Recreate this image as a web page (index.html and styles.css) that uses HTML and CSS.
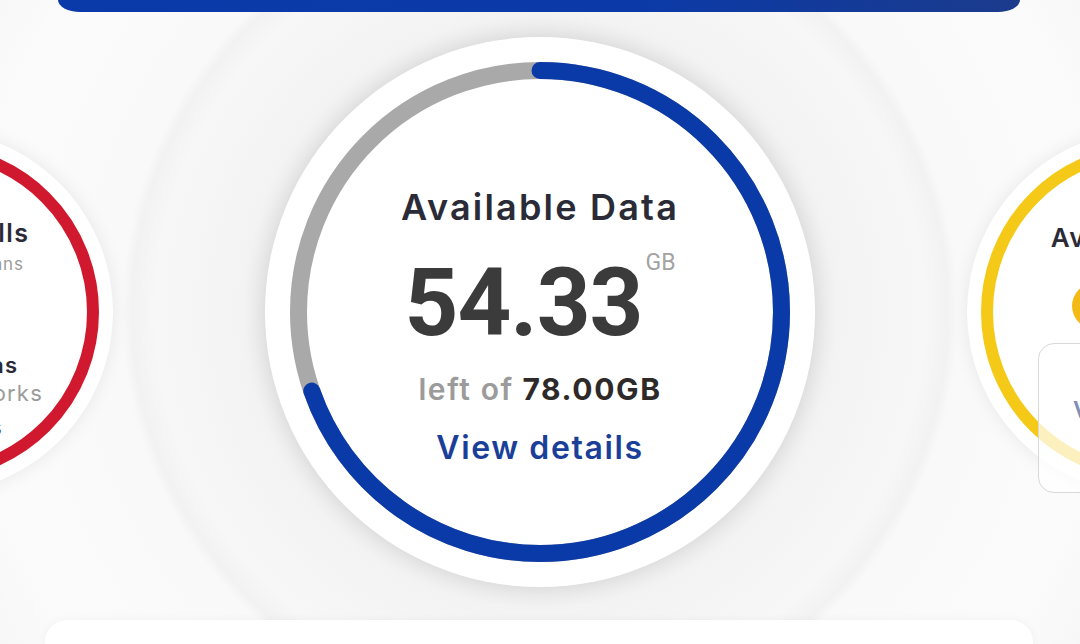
FILE: index.html
```html
<!DOCTYPE html>
<html lang="en">
<head>
  <meta charset="UTF-8">
  <meta name="viewport" content="width=device-width, initial-scale=1.0">
  <title>My Usage</title>
  <link rel="stylesheet" href="styles.css">
</head>
<body>
  <div class="topbar"></div>

  <div class="carousel">
    <!-- calls -->
    <div class="dial dial-side">
      <svg class="ring" width="336" height="336" viewBox="0 0 336 336">
        <circle cx="168" cy="168" r="162" fill="none" stroke="#d0192e" stroke-width="12"/>
      </svg>
      <div class="dial-body side-body">
        <div class="side-title">Available Calls</div>
        <div class="side-sub">Valid on all call plans</div>
        <div class="side-value">350</div>
        <div class="side-strong">Unlimited mins</div>
        <div class="side-muted">across all networks</div>
        <div class="side-link">View details</div>
      </div>
    </div>

    <!-- data -->
    <div class="dial dial-main">
      <svg class="ring" width="500" height="500" viewBox="0 0 500 500">
        <circle cx="250" cy="250" r="241.5" fill="none" stroke="#a9a9a9" stroke-width="17"/>
        <circle cx="250" cy="250" r="241.5" fill="none" stroke="#0a3aa8" stroke-width="17"
                stroke-linecap="round" stroke-dasharray="1057 2000" transform="rotate(-90 250 250)"/>
      </svg>
      <div class="dial-body main-body">
        <div class="main-title">Available Data</div>
        <div class="main-value">
          <span class="amount">54.33</span>
          <span class="unit">GB</span>
        </div>
        <div class="main-total"><span class="muted">left of</span> 78.00GB</div>
        <a class="main-link" href="#">View details</a>
      </div>
    </div>

    <!-- sms -->
    <div class="dial dial-side">
      <svg class="ring" width="336" height="336" viewBox="0 0 336 336">
        <circle cx="168" cy="168" r="162" fill="none" stroke="#f5c918" stroke-width="12"/>
      </svg>
      <div class="dial-body side-body sms-body">
        <div class="side-title sms-title">Available SMS</div>
        <div class="loader"></div>
      </div>
      <div class="overlay">
        <span class="overlay-link">View details</span>
      </div>
    </div>
  </div>

  <div class="summary"></div>
</body>
</html>
```

FILE: styles.css
```css
body {
  margin: 0;
  width: 1080px;
  height: 644px;
  overflow: hidden;
  font-family: Inter, "Open Sans", sans-serif;
  color: #2b2b38;
  background: radial-gradient(circle at 540px 312px,
    #ebebeb 0, #ebebeb 276px, #f3f3f3 298px, #f7f7f7 385px,
    #f2f2f2 408px, #f9f9f9 418px, #fbfbfb 560px, #f7f7f7 640px, #fbfbfb 700px);
}
.topbar {
  margin-left: 58px;
  width: 962px;
  height: 12px;
  border-radius: 0 0 22px 22px / 0 0 12px 12px;
  background: linear-gradient(90deg, #0a3aa9 0%, #0b3aa8 60%, #1b3b8c 100%);
}
.carousel {
  margin-top: 25px;
  height: 550px;
  display: flex;
  justify-content: center;
  align-items: center;
  gap: 152px;
}
.dial {
  flex-shrink: 0;
  display: grid;
  border-radius: 50%;
  background: #fff;
  position: relative;
}
.dial > .ring,
.dial > .dial-body {
  grid-area: 1 / 1;
}
.ring {
  align-self: center;
  justify-self: center;
}
.dial-body {
  display: flex;
  flex-direction: column;
  align-items: center;
  white-space: nowrap;
}
.dial-main {
  width: 550px;
  height: 550px;
  box-shadow: 0 0 22px rgba(0, 0, 0, 0.09);
}
.dial-side {
  width: 364px;
  height: 364px;
  box-shadow: 0 0 18px rgba(0, 0, 0, 0.08);
}

/* main dial */
.main-body {
  padding-top: 149px;
}
.main-title {
  font-size: 36px;
  line-height: 42px;
  font-weight: 600;
  letter-spacing: 2.2px;
  color: #2b2b38;
}
.main-value {
  display: flex;
  align-items: flex-start;
  margin-top: 35px;
  font-family: Roboto, sans-serif;
}
.amount {
  font-size: 94px;
  line-height: 80px;
  font-weight: 700;
  color: #3b3b3b;
  letter-spacing: -1px;
}
.unit {
  font-size: 23px;
  line-height: 21px;
  color: #a3a3a3;
  margin: -11px 0 0 3px;
}
.main-total {
  margin-top: 28px;
  font-size: 30px;
  line-height: 36px;
  font-weight: 700;
  letter-spacing: 1.6px;
  color: #2e2a2a;
}
.main-total .muted {
  font-weight: 600;
  color: #9b9b9b;
}
.main-link {
  margin-top: 22px;
  font-size: 32px;
  line-height: 38px;
  font-weight: 600;
  letter-spacing: 1.6px;
  color: #1b3f99;
  text-decoration: none;
}

/* side dials */
.side-body {
  padding-top: 88px;
}
.side-title {
  font-size: 25px;
  line-height: 30px;
  font-weight: 600;
  letter-spacing: 1.4px;
  color: #2b2b38;
}
.side-sub {
  margin-top: 4px;
  font-size: 17px;
  line-height: 24px;
  letter-spacing: 0.8px;
  color: #9b9b9b;
}
.side-value {
  font-family: Roboto, sans-serif;
  font-size: 56px;
  line-height: 60px;
  font-weight: 700;
  color: #3b3b3b;
}
.side-strong {
  margin-top: 15px;
  font-size: 22px;
  line-height: 28px;
  font-weight: 600;
  letter-spacing: 1.2px;
  color: #2b2b38;
}
.side-muted {
  font-size: 22px;
  line-height: 28px;
  letter-spacing: 1.2px;
  color: #9b9b9b;
}
.side-link {
  margin-top: 6px;
  font-size: 22px;
  line-height: 28px;
  font-weight: 600;
  letter-spacing: 1.2px;
  color: #1b3f99;
}
.sms-body {
  padding-top: 92px;
}
.sms-title {
  font-size: 26px;
  line-height: 32px;
}
.loader {
  margin-top: 29px;
  width: 154px;
  height: 46px;
  border-radius: 23px;
  background: linear-gradient(90deg, #f3b914, #f7cf2a);
}
.overlay {
  position: absolute;
  left: 71px;
  top: 213px;
  width: 222px;
  height: 150px;
  box-sizing: border-box;
  border: 1px solid #d9d9d9;
  border-radius: 16px;
  background: rgba(255, 255, 255, 0.72);
  display: flex;
  align-items: center;
  justify-content: center;
}
.overlay-link {
  font-size: 23px;
  font-weight: 600;
  letter-spacing: 1.4px;
  color: #7f8fb5;
  margin-top: -16px;
}

.summary {
  margin: 33px 0 0 45px;
  width: 988px;
  height: 60px;
  border-radius: 22px;
  background: #fff;
  box-shadow: 0 0 10px rgba(0, 0, 0, 0.04);
}
```
